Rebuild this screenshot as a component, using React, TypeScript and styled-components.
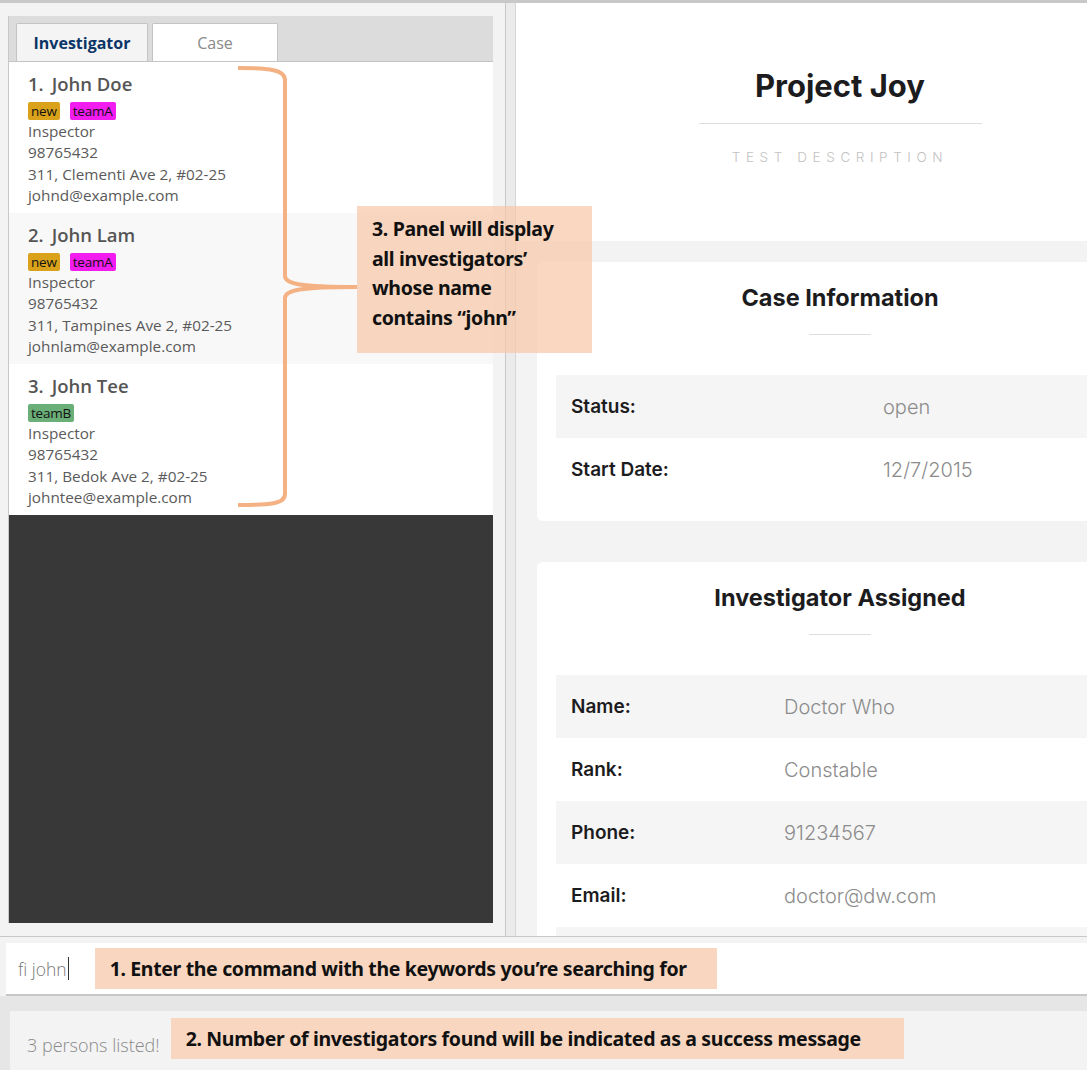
import React from "react";
import styled, { createGlobalStyle } from "styled-components";

const Global = createGlobalStyle`
  html, body { margin: 0; padding: 0; }
  body { width: 1087px; height: 1070px; overflow: hidden; background: #f3f3f3; }
  * { box-sizing: border-box; }
`;

const Root = styled.div`
  position: relative;
  width: 1087px;
  height: 1070px;
  display: flex;
  flex-direction: column;
  background: #f3f3f3;
  overflow: hidden;
`;

const TopStrip = styled.div`
  height: 3px;
  background: #c8c8c8;
  flex-shrink: 0;
`;

const Split = styled.div`
  display: flex;
  height: 934px;
  flex-shrink: 0;
  border-bottom: 1px solid #c8c8c8;
`;

const LeftPane = styled.div`
  width: 505px;
  flex-shrink: 0;
  padding: 13px 12px 13px 8px;
  background: #f3f3f3;
  display: flex;
`;

const ListPanel = styled.div`
  flex: 1;
  display: flex;
  flex-direction: column;
  border-left: 1px solid #c8c8c8;
  background: #383838;
`;

const TabBar = styled.div`
  height: 46px;
  background: #dcdcdc;
  border-bottom: 1px solid #c4c4c4;
  display: flex;
  align-items: flex-end;
  gap: 4px;
  padding-left: 7px;
`;

const Tab = styled.div<{ $active?: boolean }>`
  height: 38px;
  width: ${(p) => (p.$active ? "132px" : "126px")};
  display: flex;
  align-items: center;
  justify-content: center;
  border: 1px solid #c4c4c4;
  border-bottom: none;
  border-radius: 2px 2px 0 0;
  background: ${(p) => (p.$active ? "#f4f4f4" : "#ffffff")};
  color: ${(p) => (p.$active ? "#0b3566" : "#8a8a8a")};
  font-family: "Open Sans", sans-serif;
  font-weight: ${(p) => (p.$active ? 700 : 400)};
  font-size: 16px;
`;

const PersonCard = styled.div<{ $alt?: boolean }>`
  height: 151px;
  background: ${(p) => (p.$alt ? "#f8f8f8" : "#ffffff")};
  padding: 10px 0 0 19px;
  font-family: "Open Sans", sans-serif;
  color: #5a5a5a;
`;

const Name = styled.div`
  font-size: 18.5px;
  font-weight: 600;
  line-height: 24px;
  color: #555;
  display: flex;
  gap: 8px;
`;

const Tags = styled.div`
  display: flex;
  gap: 10px;
  margin-top: 6px;
  height: 18px;
`;

const Tag = styled.span<{ $bg: string }>`
  background: ${(p) => p.$bg};
  color: #111;
  font-size: 13.5px;
  line-height: 18px;
  padding: 0 3px;
  border-radius: 2px;
  letter-spacing: -0.2px;
`;

const Detail = styled.div`
  font-size: 15.3px;
  line-height: 21.3px;
`;

const Details = styled.div`
  margin-top: 1px;
`;

const Divider = styled.div`
  width: 11px;
  flex-shrink: 0;
  background: #ebebeb;
  border-left: 1px solid #c8c8c8;
  border-right: 1px solid #d6d6d6;
`;

const RightPane = styled.div`
  flex: 1;
  overflow: hidden;
  background: #f3f3f3;
`;

const RightContent = styled.div`
  width: 648px;
  display: flex;
  flex-direction: column;
  font-family: "Inter", sans-serif;
`;

const Header = styled.div`
  height: 238px;
  background: #fff;
  display: flex;
  flex-direction: column;
  align-items: center;
  padding-top: 64px;
`;

const Title = styled.div`
  font-size: 31px;
  font-weight: 700;
  line-height: 38px;
  color: #1c1c1e;
`;

const Rule = styled.div<{ $w: number; $mt: number }>`
  width: ${(p) => p.$w}px;
  height: 1px;
  background: #dedede;
  margin-top: ${(p) => p.$mt}px;
`;

const Desc = styled.div`
  margin-top: 23px;
  font-size: 13.5px;
  line-height: 20px;
  letter-spacing: 5.6px;
  color: #c2c2c2;
  font-weight: 300;
`;

const Card = styled.div<{ $mt: number }>`
  margin: ${(p) => p.$mt}px 21px 0;
  background: #fff;
  border-radius: 6px;
  display: flex;
  flex-direction: column;
  align-items: center;
  padding: 20px 19px 20px;
`;

const CardTitle = styled.div`
  font-size: 23.5px;
  font-weight: 700;
  line-height: 32px;
  color: #1c1c1e;
`;

const Table = styled.div`
  margin-top: 40px;
  width: 100%;
  display: flex;
  flex-direction: column;
`;

const Row = styled.div<{ $alt?: boolean; $labelW: number }>`
  height: 63px;
  display: grid;
  grid-template-columns: ${(p) => p.$labelW}px 1fr;
  align-items: center;
  padding-left: 15px;
  background: ${(p) => (p.$alt ? "#f5f5f5" : "#fff")};
`;

const Label = styled.div`
  font-size: 19px;
  font-weight: 600;
  color: #1c1c1e;
`;

const Value = styled.div`
  font-size: 20px;
  font-weight: 300;
  color: #8c8c8c;
`;

const CommandArea = styled.div`
  padding: 6px 0 0 6px;
  background: #f3f3f3;
  flex-shrink: 0;
`;

const CommandBox = styled.div`
  height: 53px;
  background: #fff;
  border-bottom: 2px solid #c8c8c8;
  display: flex;
  align-items: center;
  padding-left: 12px;
  font-family: "Open Sans", sans-serif;
`;

const CommandText = styled.span`
  font-size: 17.5px;
  font-weight: 300;
  color: #777;
`;

const Caret = styled.span`
  width: 1px;
  height: 23px;
  background: #333;
  margin-left: 1px;
`;

const Note = styled.div<{ $ml: number; $mt?: number; $w?: number }>`
  margin-left: ${(p) => p.$ml}px;
  margin-top: ${(p) => p.$mt ?? 0}px;
  height: 41px;
  width: ${(p) => (p.$w ? `${p.$w}px` : "auto")};
  background: #f8d6c0;
  display: flex;
  align-items: center;
  padding-left: 15px;
  font-family: "Noto Sans", sans-serif;
  font-weight: 700;
  font-size: 19.5px;
  color: #111;
  letter-spacing: -0.35px;
  white-space: nowrap;
`;

const ResultArea = styled.div`
  flex: 1;
  background: #e6e6e6;
  padding: 15px 0 0 10px;
`;

const ResultBox = styled.div`
  height: 100%;
  background: #f3f3f3;
  display: flex;
  align-items: flex-start;
  padding-left: 17px;
  font-family: "Open Sans", sans-serif;
`;

const ResultText = styled.span`
  margin-top: 22px;
  font-size: 18px;
  line-height: 24px;
  font-weight: 300;
  color: #8a8a8a;
`;

const Callout = styled.div`
  position: absolute;
  left: 357px;
  top: 206px;
  width: 235px;
  height: 147px;
  background: rgba(247, 200, 168, 0.72);
  padding: 8px 0 0 15px;
  font-family: "Noto Sans", sans-serif;
  font-weight: 700;
  font-size: 19.5px;
  line-height: 29.5px;
  color: #111;
  letter-spacing: -0.35px;
  white-space: nowrap;
`;

const Brace = styled.svg`
  position: absolute;
  left: 0;
  top: 0;
  pointer-events: none;
`;

type Person = {
  name: string;
  tags: { label: string; bg: string }[];
  address: string;
  email: string;
};

const people: Person[] = [
  {
    name: "John Doe",
    tags: [
      { label: "new", bg: "#d9a21a" },
      { label: "teamA", bg: "#f21cf0" },
    ],
    address: "311, Clementi Ave 2, #02-25",
    email: "johnd@example.com",
  },
  {
    name: "John Lam",
    tags: [
      { label: "new", bg: "#d9a21a" },
      { label: "teamA", bg: "#f21cf0" },
    ],
    address: "311, Tampines Ave 2, #02-25",
    email: "johnlam@example.com",
  },
  {
    name: "John Tee",
    tags: [{ label: "teamB", bg: "#6aae78" }],
    address: "311, Bedok Ave 2, #02-25",
    email: "johntee@example.com",
  },
];

const caseRows = [
  ["Status:", "open"],
  ["Start Date:", "12/7/2015"],
];

const invRows = [
  ["Name:", "Doctor Who"],
  ["Rank:", "Constable"],
  ["Phone:", "91234567"],
  ["Email:", "doctor@dw.com"],
  ["", ""],
];

export default function App() {
  return (
    <Root>
      <Global />
      <TopStrip />
      <Split>
        <LeftPane>
          <ListPanel>
            <TabBar>
              <Tab $active>Investigator</Tab>
              <Tab>Case</Tab>
            </TabBar>
            {people.map((p, i) => (
              <PersonCard key={p.name} $alt={i % 2 === 1}>
                <Name>
                  <span>{i + 1}.</span>
                  <span>{p.name}</span>
                </Name>
                <Tags>
                  {p.tags.map((t) => (
                    <Tag key={t.label} $bg={t.bg}>
                      {t.label}
                    </Tag>
                  ))}
                </Tags>
                <Details>
                  <Detail>Inspector</Detail>
                  <Detail>98765432</Detail>
                  <Detail>{p.address}</Detail>
                  <Detail>{p.email}</Detail>
                </Details>
              </PersonCard>
            ))}
          </ListPanel>
        </LeftPane>
        <Divider />
        <RightPane>
          <RightContent>
            <Header>
              <Title>Project Joy</Title>
              <Rule $w={283} $mt={18} />
              <Desc>TEST DESCRIPTION</Desc>
            </Header>
            <Card $mt={21}>
              <CardTitle>Case Information</CardTitle>
              <Rule $w={62} $mt={20} />
              <Table>
                {caseRows.map(([l, v], i) => (
                  <Row key={l} $alt={i % 2 === 0} $labelW={312}>
                    <Label>{l}</Label>
                    <Value>{v}</Value>
                  </Row>
                ))}
              </Table>
            </Card>
            <Card $mt={41}>
              <CardTitle>Investigator Assigned</CardTitle>
              <Rule $w={62} $mt={20} />
              <Table>
                {invRows.map(([l, v], i) => (
                  <Row key={i} $alt={i % 2 === 0} $labelW={213}>
                    <Label>{l}</Label>
                    <Value>{v}</Value>
                  </Row>
                ))}
              </Table>
            </Card>
          </RightContent>
        </RightPane>
      </Split>
      <CommandArea>
        <CommandBox>
          <CommandText>fi john</CommandText>
          <Caret />
          <Note $ml={26} $w={622}>
            1. Enter the command with the keywords you’re searching for
          </Note>
        </CommandBox>
      </CommandArea>
      <ResultArea>
        <ResultBox>
          <ResultText>3 persons listed!</ResultText>
          <Note $ml={11} $mt={7} $w={733}>
            2. Number of investigators found will be indicated as a success message
          </Note>
        </ResultBox>
      </ResultArea>
      <Callout>
        3. Panel will display
        <br />
        all investigators’
        <br />
        whose name
        <br />
        contains “john”
      </Callout>
      <Brace width="400" height="520" viewBox="0 0 400 520">
        <path
          d="M238 68 C270 68 285 70 285 80 L285 276 C285 284 300 287 357 287 C300 287 285 290 285 298 L285 494 C285 504 270 505 238 505"
          fill="none"
          stroke="#f4b183"
          strokeWidth="4"
        />
      </Brace>
    </Root>
  );
}
